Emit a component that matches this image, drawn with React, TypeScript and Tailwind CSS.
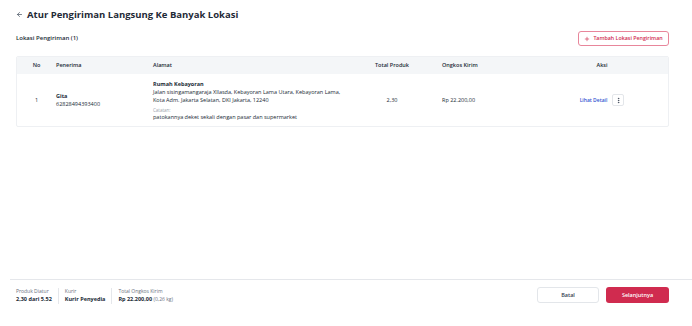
import { ArrowLeft, Plus, EllipsisVertical } from "lucide-react";

const FONT = { fontFamily: '"Open Sans", "Noto Sans", sans-serif' };

const COLS = "grid grid-cols-[39px_97px_200px_78px_103px_136px]";

export default function App() {
  return (
    <div className="flex h-[326px] w-[692px] flex-col bg-white text-[#212b36]" style={FONT}>
      {/* Header */}
      <main className="flex-1 px-4">
        <div className="flex h-[28px] items-center gap-[4px] pt-[1px]">
          <ArrowLeft className="h-[7px] w-[7px] text-[#4b5563]" strokeWidth={2.5} />
          <h1 className="text-[9.5px] font-bold leading-none text-[#1f2a37]">
            Atur Pengiriman Langsung Ke Banyak Lokasi
          </h1>
        </div>

        <div className="mt-[3px] flex items-center justify-between">
          <h2 className="text-[6px] font-semibold">Lokasi Pengiriman (1)</h2>
          <button className="mr-[7px] flex h-[15px] w-[91px] items-center justify-center gap-[3px] rounded-[3px] border border-[#e8869b] text-[5.3px] font-semibold text-[#d02b4f]">
            <Plus className="h-[6px] w-[6px]" strokeWidth={2.5} />
            Tambah Lokasi Pengiriman
          </button>
        </div>

        {/* Table */}
        <div className="mt-[10px] w-[653px] overflow-hidden rounded-[2px] border border-[#eef0f3]">
          <div className={`${COLS} h-[17px] items-center bg-[#f4f6f8] text-[5.5px] font-semibold`}>
            <div className="text-center">No</div>
            <div>Penerima</div>
            <div>Alamat</div>
            <div className="text-center">Total Produk</div>
            <div className="pl-[11px]">Ongkos Kirim</div>
            <div className="text-center">Aksi</div>
          </div>
          <div className={`${COLS} h-[52px] items-center text-[5.5px] leading-[8px]`}>
            <div className="text-center">1</div>
            <div>
              <div className="font-bold">Gita</div>
              <div>62828494393400</div>
            </div>
            <div>
              <div className="font-bold">Rumah Kebayoran</div>
              <div className="pr-[6px]">
                Jalan sisingamangaraja Xllasda, Kebayoran Lama Utara, Kebayoran Lama, Kota Adm. Jakarta Selatan, DKI Jakarta, 12240
              </div>
              <div className="mt-[3px] text-[4.5px] leading-[6px] text-[#9aa3ad]">Catatan:</div>
              <div>patokannya deket sekali dengan pasar dan supermarket</div>
            </div>
            <div className="text-center">2,30</div>
            <div className="pl-[11px]">Rp 22.200,00</div>
            <div className="flex items-center justify-center gap-[5px]">
              <span className="text-[5px] font-semibold text-[#3554d1]">Lihat Detail</span>
              <button className="flex h-[12px] w-[12px] items-center justify-center rounded-[2px] border border-[#e3e6ea]">
                <EllipsisVertical className="h-[7px] w-[7px] text-[#374151]" strokeWidth={2.5} />
              </button>
            </div>
          </div>
        </div>
      </main>

      {/* Footer */}
      <footer className="ml-[10px] flex h-[47px] items-start justify-between border-t border-[#e5e7eb] pr-[23px] pl-[6px] pt-[7px]">
        <div className="flex items-stretch pt-[1px]">
          <div className="pr-[6px]">
            <div className="text-[5px] leading-[7px] text-[#6b7280]">Produk Diatur</div>
            <div className="text-[5.5px] font-bold leading-[9px]">2,30 dari 5.52</div>
          </div>
          <div className="w-px bg-[#e5e7eb]" />
          <div className="px-[6px]">
            <div className="text-[5px] leading-[7px] text-[#6b7280]">Kurir</div>
            <div className="text-[5.5px] font-bold leading-[9px]">Kurir Penyedia</div>
          </div>
          <div className="w-px bg-[#e5e7eb]" />
          <div className="pl-[6px]">
            <div className="text-[5px] leading-[7px] text-[#6b7280]">Total Ongkos Kirim</div>
            <div className="text-[5.5px] font-bold leading-[9px]">
              Rp 22.200,00 <span className="text-[5px] font-normal text-[#6b7280]">(0,26 kg)</span>
            </div>
          </div>
        </div>
        <div className="flex gap-[7px]">
          <button className="h-[16px] w-[62px] rounded-[3px] border border-[#e3e6ea] text-[5.5px] font-semibold text-[#374151]">
            Batal
          </button>
          <button className="h-[16px] w-[63px] rounded-[3px] bg-[#d02b4f] text-[5.5px] font-semibold text-white">
            Selanjutnya
          </button>
        </div>
      </footer>
    </div>
  );
}
